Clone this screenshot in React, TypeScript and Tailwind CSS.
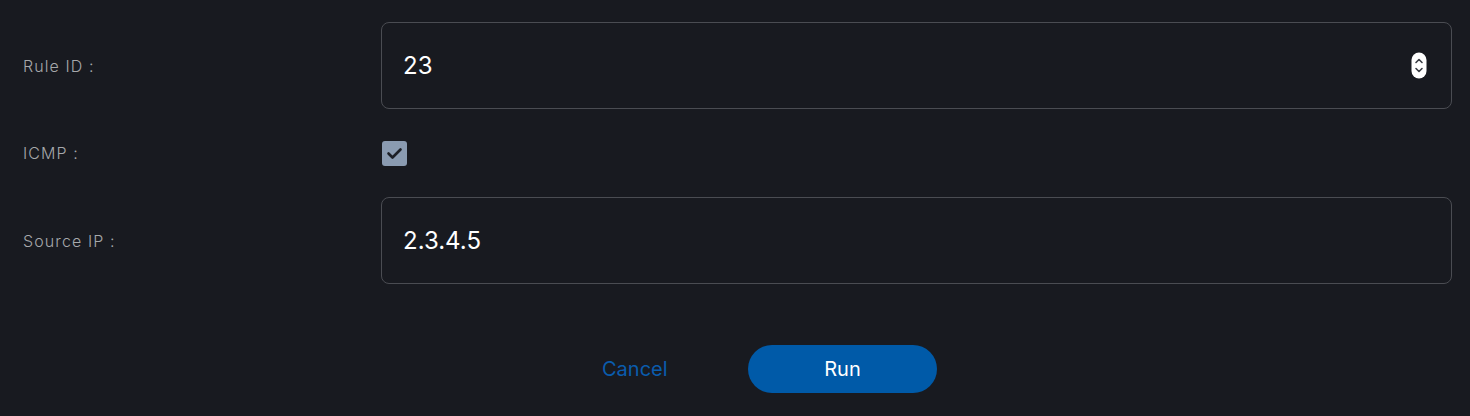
import React from "react";

const Spinner = () => (
    <svg width="16" height="27" viewBox="0 0 16 27" className="shrink-0">
        <rect x="0.5" y="0.5" width="15" height="26" rx="7.5" fill="#ffffff" />
        <path d="M5 10.5 L8 7.5 L11 10.5" stroke="#3a3d44" strokeWidth="1.6" fill="none" strokeLinecap="round" strokeLinejoin="round" />
        <path d="M5 16.5 L8 19.5 L11 16.5" stroke="#3a3d44" strokeWidth="1.6" fill="none" strokeLinecap="round" strokeLinejoin="round" />
    </svg>
);

export default function App() {
    return (
        <div className="w-[1470px] h-[416px] bg-[#181a20] pt-[22px] pl-[23px] pr-[18px] font-['Inter',sans-serif]">
            {/* Rule ID */}
            <div className="flex items-center h-[87px]">
                <label className="w-[358px] text-[16px] font-light text-[#a6a8ab] tracking-[1.1px]">Rule ID :</label>
                <div className="flex-1 h-full flex items-center justify-between pl-[21px] pr-[24px] border border-[#4a4c52] rounded-[8px]">
                    <span className="text-[24px] text-white">23</span>
                    <Spinner />
                </div>
            </div>

            {/* ICMP */}
            <div className="flex items-center h-[88px]">
                <label className="w-[358px] text-[16px] font-light text-[#a6a8ab] tracking-[1.1px]">ICMP :</label>
                <div className="ml-[1px] w-[25px] h-[25px] rounded-[3px] bg-[#8a9bb1] flex items-center justify-center">
                    <svg width="17" height="17" viewBox="0 0 17 17">
                        <path d="M2.5 8.5 L6.5 12.5 L14.5 4.5" stroke="#1c1f26" strokeWidth="2.6" fill="none" strokeLinecap="round" strokeLinejoin="round" />
                    </svg>
                </div>
            </div>

            {/* Source IP */}
            <div className="flex items-center h-[87px]">
                <label className="w-[358px] text-[16px] font-light text-[#a6a8ab] tracking-[1.1px]">Source IP :</label>
                <div className="flex-1 h-full flex items-center pl-[21px] border border-[#4a4c52] rounded-[8px]">
                    <span className="text-[24px] text-white">2.3.4.5</span>
                </div>
            </div>

            {/* Actions */}
            <div className="flex items-center mt-[61px] pl-[579px]">
                <button className="text-[20px] text-[#0a5cad] w-[64px] text-left">Cancel</button>
                <button className="ml-[82px] w-[189px] h-[48px] rounded-full bg-[#005aa8] text-white text-[20px]">Run</button>
            </div>
        </div>
    );
}
